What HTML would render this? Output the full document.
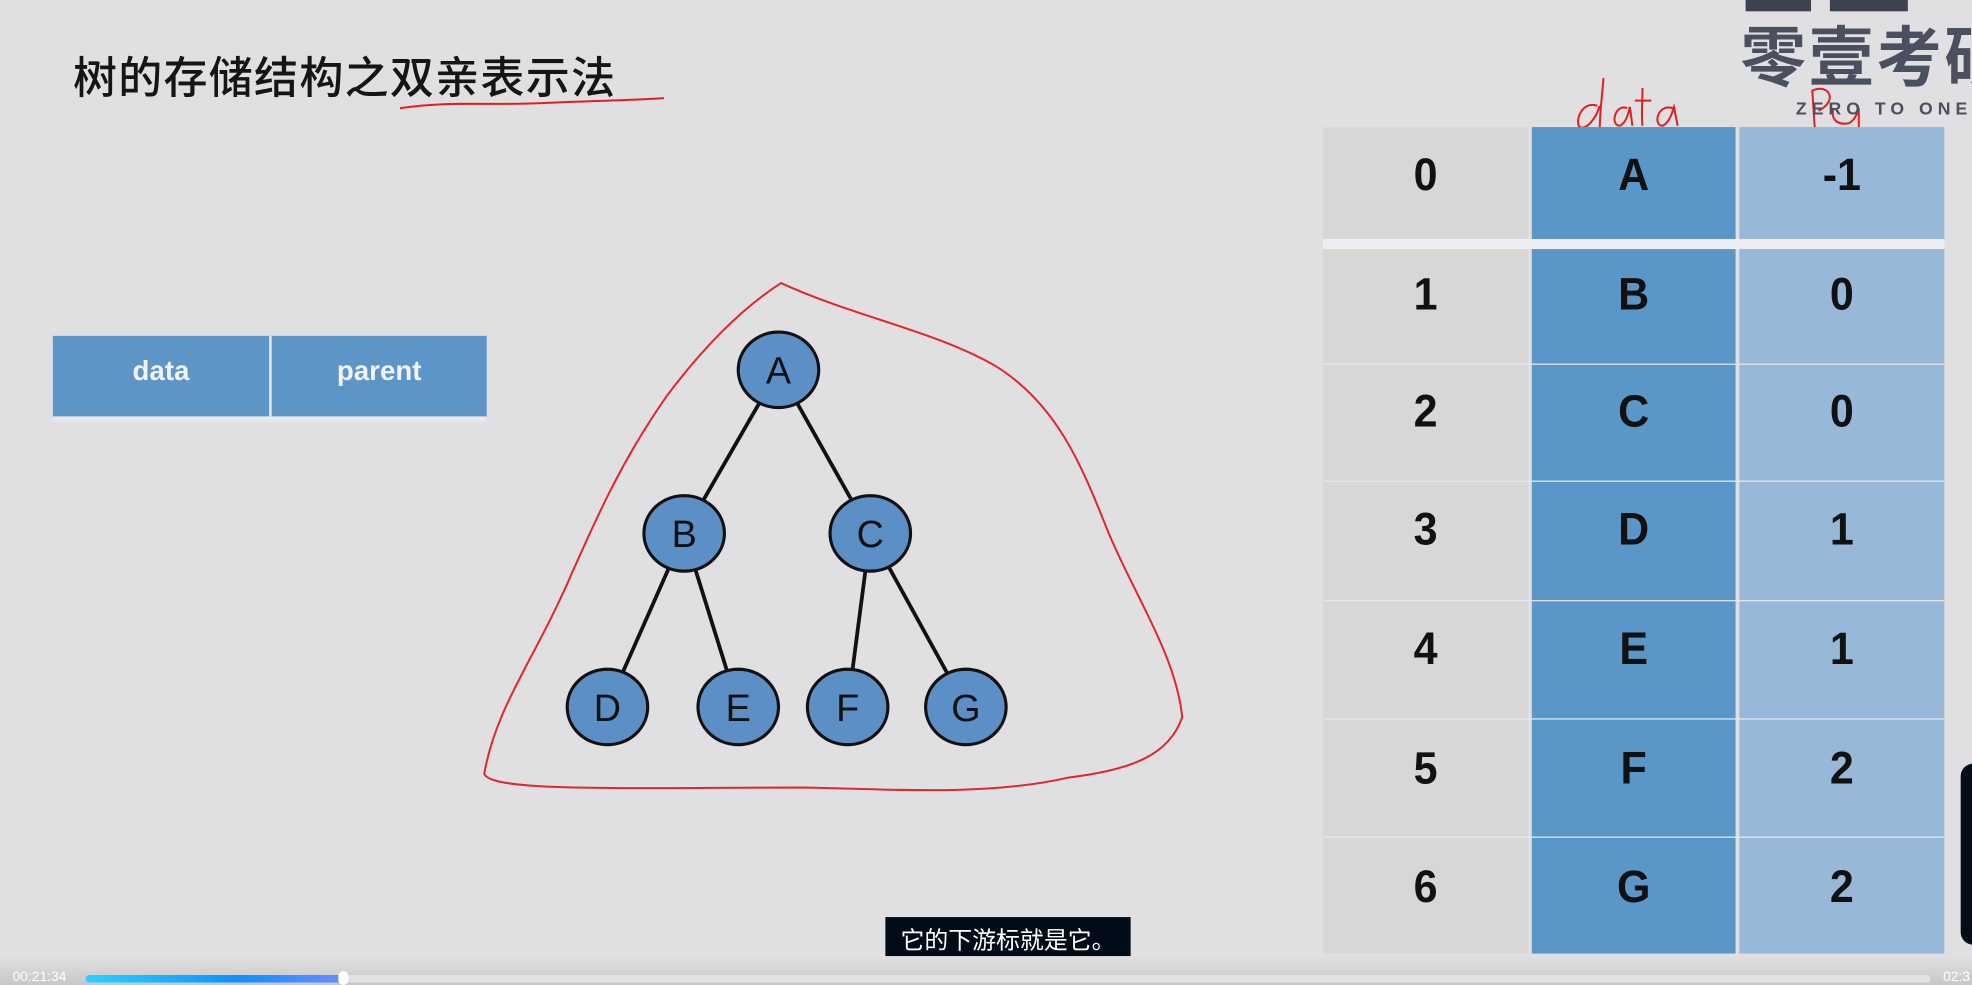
<!DOCTYPE html>
<html><head><meta charset="utf-8"><style>
html,body{margin:0;padding:0;width:1972px;height:985px;overflow:hidden;background:#e0dfe1}
#w{position:absolute;left:0;top:0;width:1568px;height:783px;transform:scale(1.25765,1.258);transform-origin:0 0;background:#e0dfe1;font-family:"Liberation Sans","Noto Sans CJK SC",sans-serif}
.a{position:absolute}
.c{position:absolute;display:flex;align-items:center;justify-content:center;font-weight:bold;font-size:36px;color:#111;font-family:"Liberation Sans",sans-serif;transform:scaleX(0.95)}
</style></head><body><div id="w">
<div class="a" style="left:58px;top:38px;font-size:35px;line-height:44px;color:#151515;font-family:'Noto Sans CJK SC',sans-serif;font-weight:500;letter-spacing:1px;white-space:nowrap">树的存储结构之双亲表示法</div>
<div class="a" style="left:42px;top:267px;width:345px;height:64px;background:#5d95c7;box-shadow:0 4px 2px #eaeaec"></div>
<div class="a" style="left:214px;top:267px;width:2px;height:64px;background:#e6e6ea"></div>
<div class="a" style="left:42px;top:282px;width:172px;text-align:center;color:#f2f2f2;font-weight:bold;font-size:22px">data</div>
<div class="a" style="left:216px;top:282px;width:171px;text-align:center;color:#f2f2f2;font-weight:bold;font-size:22px">parent</div>

<svg class="a" style="left:0;top:0" width="1568" height="783">
<path d="M318 86 C360 80 380 84 430 82 C470 80 500 80 528 78" stroke="#e02020" stroke-width="1.6" fill="none"/>
<path d="M621 225 C590 245 560 275 530 315 C495 365 475 410 455 455 C425 525 395 560 385 615 C390 630 500 626 640 626 C720 628 790 632 850 618 C900 612 930 600 940 570 C935 520 900 470 880 420 C860 370 840 320 790 290 C740 262 680 252 621 225 Z" stroke="#e02828" stroke-width="1.6" fill="none"/>
<g stroke="#111" stroke-width="3">
<line x1="619" y1="294" x2="544" y2="424"/><line x1="619" y1="294" x2="692" y2="424"/>
<line x1="544" y1="424" x2="483" y2="562"/><line x1="544" y1="424" x2="587" y2="562"/>
<line x1="692" y1="424" x2="674" y2="562"/><line x1="692" y1="424" x2="768" y2="562"/>
</g>
<g fill="#5b8fc6" stroke="#111" stroke-width="2.5">
<ellipse cx="619" cy="294" rx="32" ry="30"/><ellipse cx="544" cy="424" rx="32" ry="30"/><ellipse cx="692" cy="424" rx="32" ry="30"/>
<ellipse cx="483" cy="562" rx="32" ry="30"/><ellipse cx="587" cy="562" rx="32" ry="30"/><ellipse cx="674" cy="562" rx="32" ry="30"/><ellipse cx="768" cy="562" rx="32" ry="30"/>
</g>
<g font-family="Liberation Sans" font-size="30" fill="#111" text-anchor="middle">
<text x="619" y="305">A</text><text x="544" y="435">B</text><text x="692" y="435">C</text>
<text x="483" y="573">D</text><text x="587" y="573">E</text><text x="674" y="573">F</text><text x="768" y="573">G</text>
</g>
<g stroke="#e02020" stroke-width="1.6" fill="none">
<path d="M1270 84 C1258 80 1252 96 1256 101 C1262 104 1270 92 1272 84 M1275 62 C1274 75 1272 90 1272 103"/>
<path d="M1294 86 C1284 82 1280 100 1288 100 C1294 97 1295 88 1296 85 L1298 100"/>
<path d="M1306 70 C1306 80 1305 92 1306 100 M1300 80 L1313 80"/>
<path d="M1330 86 C1318 82 1314 100 1322 100 C1328 97 1330 88 1331 85 L1334 100"/>
<path d="M1443 102 L1441 72 C1454 66 1462 80 1446 88 M1458 86 C1456 92 1458 100 1470 98 C1476 95 1477 88 1478 86 L1478 128"/>
<path d="M1502 108 L1494 118"/>
</g>
</svg>

<div class="a" style="left:1388px;top:0;width:52px;height:9px;background:#3c4250"></div>
<div class="a" style="left:1455px;top:0;width:62px;height:9px;background:#3c4250"></div>
<div class="a" style="left:1384px;top:10px;font-size:52px;line-height:64px;font-weight:bold;color:#4b5060;white-space:nowrap;font-family:'Noto Sans CJK SC',sans-serif;letter-spacing:2px">零壹考研</div>
<div class="a" style="left:1428px;top:78px;font-size:14px;font-weight:bold;color:#4b5060;letter-spacing:4px;white-space:nowrap">ZERO TO ONE</div>

<div class="a" style="left:1052px;top:190px;width:494px;height:8px;background:#eeeef2"></div>
<div class="a" style="left:1052px;top:101px;width:163px;height:89px;background:#d8d7d6"></div>
<div class="a" style="left:1218px;top:101px;width:162px;height:89px;background:#5b96c8"></div>
<div class="a" style="left:1383px;top:101px;width:163px;height:89px;background:#97b8d8"></div>
<div class="a" style="left:1052px;top:198px;width:163px;height:560px;background:#d8d7d6"></div>
<div class="a" style="left:1218px;top:198px;width:162px;height:560px;background:#5b96c8"></div>
<div class="a" style="left:1383px;top:198px;width:163px;height:560px;background:#97b8d8"></div>
<div class="a" style="left:1052px;top:289px;width:494px;height:1px;background:#e8e8ec"></div>
<div class="a" style="left:1052px;top:382px;width:494px;height:1px;background:#e8e8ec"></div>
<div class="a" style="left:1052px;top:477px;width:494px;height:1px;background:#e8e8ec"></div>
<div class="a" style="left:1052px;top:571px;width:494px;height:1px;background:#e8e8ec"></div>
<div class="a" style="left:1052px;top:665px;width:494px;height:1px;background:#e8e8ec"></div>

<div class="c" style="left:1052px;top:101px;width:163px;height:76px">0</div><div class="c" style="left:1218px;top:101px;width:162px;height:76px">A</div><div class="c" style="left:1383px;top:101px;width:163px;height:76px">-1</div>
<div class="c" style="left:1052px;top:198px;width:163px;height:72px">1</div><div class="c" style="left:1218px;top:198px;width:162px;height:72px">B</div><div class="c" style="left:1383px;top:198px;width:163px;height:72px">0</div>
<div class="c" style="left:1052px;top:290px;width:163px;height:74px">2</div><div class="c" style="left:1218px;top:290px;width:162px;height:74px">C</div><div class="c" style="left:1383px;top:290px;width:163px;height:74px">0</div>
<div class="c" style="left:1052px;top:383px;width:163px;height:76px">3</div><div class="c" style="left:1218px;top:383px;width:162px;height:76px">D</div><div class="c" style="left:1383px;top:383px;width:163px;height:76px">1</div>
<div class="c" style="left:1052px;top:478px;width:163px;height:76px">4</div><div class="c" style="left:1218px;top:478px;width:162px;height:76px">E</div><div class="c" style="left:1383px;top:478px;width:163px;height:76px">1</div>
<div class="c" style="left:1052px;top:572px;width:163px;height:78px">5</div><div class="c" style="left:1218px;top:572px;width:162px;height:78px">F</div><div class="c" style="left:1383px;top:572px;width:163px;height:78px">2</div>
<div class="c" style="left:1052px;top:666px;width:163px;height:78px">6</div><div class="c" style="left:1218px;top:666px;width:162px;height:78px">G</div><div class="c" style="left:1383px;top:666px;width:163px;height:78px">2</div>

<div class="a" style="left:1559px;top:607px;width:12px;height:144px;background:#060c18;border-radius:10px 0 0 10px"></div>

<div class="a" style="left:704px;top:729px;width:195px;height:36px;background:#020b18;color:#fff;font-size:19px;line-height:36px;text-align:center;font-family:'Noto Sans CJK SC',sans-serif">它的下游标就是它。</div>

<div class="a" style="left:0;top:760px;width:1568px;height:23px;background:linear-gradient(#e0dfe1,#c8c8ca)"></div>
<div class="a" style="left:10px;top:771px;font-size:11px;color:#fff">00:21:34</div>
<div class="a" style="left:68px;top:775px;width:1467px;height:6px;background:#e2e2e4;border-radius:3px"></div>
<div class="a" style="left:68px;top:775px;width:205px;height:6px;background:linear-gradient(90deg,#2ad0ff,#1090ff 60%,#6a8cff);border-radius:3px"></div>
<div class="a" style="left:269px;top:772px;width:8px;height:11px;background:#fff;border-radius:4px"></div>
<div class="a" style="left:1545px;top:771px;font-size:11px;color:#fff">02:3</div>
</div></body></html>
